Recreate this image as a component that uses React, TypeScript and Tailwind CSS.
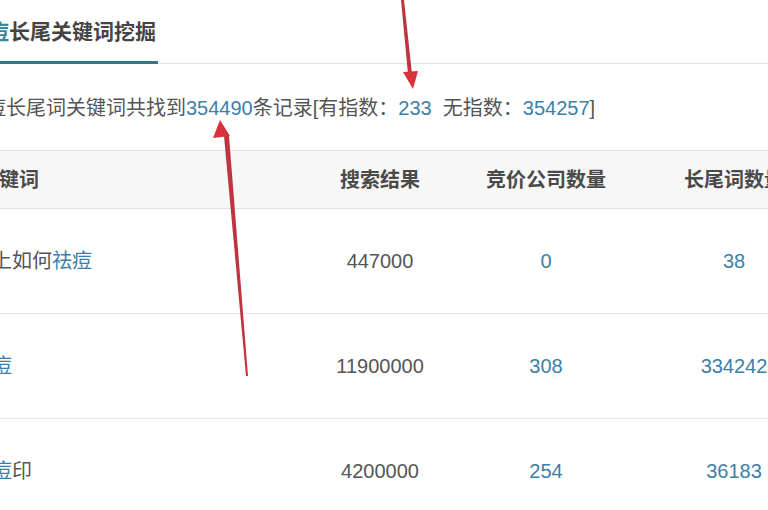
const font = { fontFamily: '"Liberation Sans", "Noto Sans CJK SC", sans-serif' };

const rows = [
  { pre: "晚上如何", kw: "祛痘", post: "", results: "447000", bids: "0", tails: "38" },
  { pre: "", kw: "祛痘", post: "", results: "11900000", bids: "308", tails: "334242" },
  { pre: "", kw: "祛痘", post: "印", results: "4200000", bids: "254", tails: "36183" },
];

function Arrows() {
  return (
    <svg className="pointer-events-none absolute inset-0" width="768" height="510" viewBox="0 0 768 510">
      <polygon points="401,0 404,0 412,74 408,74" fill="#c0343f" />
      <polygon points="403,72 418,71 413,89" fill="#d9323c" />
      <polygon points="224,136 229,136 248,376 246,376" fill="#c0343f" />
      <polygon points="213,138 230,136 220,120" fill="#d9323c" />
    </svg>
  );
}

export default function App() {
  return (
    <div className="relative h-[510px] w-[768px] overflow-hidden bg-white" style={font}>
      <div className="-ml-[48px] w-[900px]">
        <div className="flex h-[64px] border-b border-[#e3e3e3]">
          <div className="-mb-px flex items-center border-b-[3px] border-[#2e7a86] pl-[15px] pr-[2px] pt-[3px] text-[21px] font-bold text-[#444]">
            <span className="text-[#3a8a96]">祛痘</span>长尾关键词挖掘
          </div>
        </div>

        <div className="flex h-[86px] items-center pl-[14px] pt-[2px] text-[20px] text-[#555]">
          祛痘长尾词关键词共找到<span className="text-[#3c80a8]">354490</span>条记录[有指数：
          <span className="text-[#3c80a8]">233</span>
          {"\u00a0\u00a0"}无指数：<span className="text-[#3c80a8]">354257</span>]
        </div>

        <div className="border-t border-[#e3e3e3]">
          <div className="grid h-[58px] grid-cols-[340px_176px_156px_228px] items-center border-b border-[#e3e3e3] bg-[#f7f7f7] text-[20px] font-semibold text-[#4a4a4a]">
            <div className="pl-[27px]">关键词</div>
            <div className="text-center">搜索结果</div>
            <div className="text-center">竞价公司数量</div>
            <div className="pr-[8px] text-center">长尾词数量</div>
          </div>
          {rows.map((r, i) => (
            <div
              key={i}
              className="grid h-[105px] grid-cols-[340px_176px_156px_228px] items-center border-b border-[#e6e6e6] text-[20px] text-[#555]"
            >
              <div className="pl-[20px]">
                {r.pre}
                <span className="text-[#3c80a8]">{r.kw}</span>
                {r.post}
              </div>
              <div className="text-center">{r.results}</div>
              <div className="text-center text-[#3c80a8]">{r.bids}</div>
              <div className="pr-[8px] text-center text-[#3c80a8]">{r.tails}</div>
            </div>
          ))}
        </div>
      </div>
      <Arrows />
    </div>
  );
}
